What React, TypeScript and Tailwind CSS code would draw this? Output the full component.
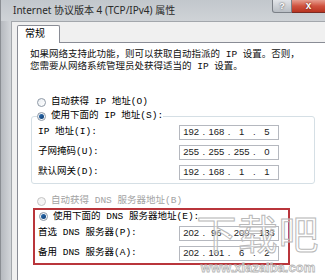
import React from "react";

const cjk = "font-['Liberation_Mono','Noto_Sans_CJK_SC',monospace]";

function Radio({ checked, disabled }: { checked?: boolean; disabled?: boolean }) {
  return (
    <span
      className={`inline-flex items-center justify-center w-[9px] h-[9px] rounded-full border ${
        disabled ? "border-[#c4c4c4] bg-[#f4f4f4]" : "border-[#8e99a6] bg-gradient-to-br from-[#e9edf1] to-[#ffffff]"
      }`}
    >
      {checked && <span className="w-[5px] h-[5px] rounded-full bg-gradient-to-br from-[#2d6fb2] to-[#0e3d73]" />}
    </span>
  );
}

function IpBox({ parts }: { parts: string[] }) {
  return (
    <div className="flex items-center w-[100px] h-[15px] border border-[#b5b8bf] bg-white text-[9.5px] text-[#222] font-['Liberation_Sans',sans-serif] leading-none">
      {parts.map((p, i) => (
        <React.Fragment key={i}>
          <span className="flex-1 text-center">{p}</span>
          {i < parts.length - 1 && <span className="w-[3px] text-center">.</span>}
        </React.Fragment>
      ))}
    </div>
  );
}

function Row({ label, parts }: { label: string; parts: string[] }) {
  return (
    <div className="grid grid-cols-[141px_100px] items-center h-[20px]">
      <span className="text-[9.5px] leading-none">{label}</span>
      <IpBox parts={parts} />
    </div>
  );
}

export default function App() {
  return (
    <div className={`w-[325px] h-[280px] overflow-hidden bg-[#c7cbd0] flex flex-col relative text-black ${cjk}`}>
      {/* Title bar */}
      <div className="h-[21px] flex items-start bg-gradient-to-b from-[#c2c7cc] to-[#cfd3d7] border-l border-[#8a8e93]">
        <span className="pl-[12px] pt-[3px] text-[10px] leading-[14px] text-[#2a2a2a] font-['Noto_Sans','Noto_Sans_CJK_SC',sans-serif]">
          Internet 协议版本 4 (TCP/IPv4) 属性
        </span>
        <div className="ml-auto flex">
          <div className="w-[20px] h-[13px] flex items-center justify-center rounded-bl-[3px] border border-t-0 border-[#7b8087] bg-gradient-to-b from-[#e2e5e9] to-[#b9bec4] text-[9px] leading-none font-bold text-white font-['Liberation_Sans',sans-serif] [text-shadow:0_0_2px_#333]">
            ?
          </div>
          <div className="w-[33px] h-[13px] flex items-center justify-center border-b border-[#7a2a22] bg-gradient-to-b from-[#e59d8f] via-[#d0523f] to-[#b8331f] text-[10px] leading-none font-bold text-white font-['Liberation_Sans',sans-serif] [text-shadow:0_0_2px_#4a0d05]">
            x
          </div>
        </div>
      </div>

      <div className="flex flex-1">
        {/* Left frame */}
        <div className="w-[11px] bg-gradient-to-r from-[#b6babf] to-[#d3d6da] border-l border-[#8a8e93]" />
        {/* Dialog body */}
        <div className="flex-1 flex flex-col bg-[#f0f0f0] border-l border-t border-[#a3a7ac] pl-[5px] pt-[3px]">
          {/* Tab */}
          <div className="flex">
            <div className="relative z-10 -mb-px w-[43px] h-[18px] bg-white border border-b-0 border-[#898c95] rounded-t-[2px] pl-[7px] pt-[3px] text-[10px] leading-[12px]">
              常规
            </div>
          </div>
          {/* Panel */}
          <div className="flex-1 bg-white border border-[#898c95] border-r-0 border-b-0 pl-[12px] pt-[6px]">
            <p className="text-[9.5px] leading-[12px] whitespace-nowrap text-[#111]">
              如果网络支持此功能，则可以获取自动指派的 IP 设置。否则，
              <br />
              您需要从网络系统管理员处获得适当的 IP 设置。
            </p>

            <div className="mt-[22px] ml-[7px] flex items-center gap-[5px] h-[14px] text-[9.5px] leading-none">
              <Radio />
              <span>自动获得 IP 地址(O)</span>
            </div>

            <fieldset className="ml-[1px] w-[284px] border border-[#d5dfe5] rounded-[3px] px-[5px] pb-[1px]">
              <legend className="flex items-center gap-[5px] h-[14px] text-[9.5px] leading-none">
                <Radio checked />
                <span>使用下面的 IP 地址(S):</span>
              </legend>
              <div className="-mt-px pl-[1px]">
                <Row label="IP 地址(I):" parts={["192", "168", "1", "5"]} />
                <Row label="子网掩码(U):" parts={["255", "255", "255", "0"]} />
                <Row label="默认网关(D):" parts={["192", "168", "1", "1"]} />
              </div>
            </fieldset>

            <div className="mt-[10px] ml-[7px] flex items-center gap-[5px] h-[14px] text-[9.5px] leading-none text-[#a3a3a3]">
              <Radio disabled />
              <span>自动获得 DNS 服务器地址(B)</span>
            </div>

            <div className="ml-[3px] w-[257px] border-2 border-[#b9353b] pl-[3px]">
              <div className="flex items-center gap-[5px] h-[13px] pl-[1px] text-[9.5px] leading-none">
                <Radio checked />
                <span>使用下面的 DNS 服务器地址(E):</span>
              </div>
              <Row label="首选 DNS 服务器(P):" parts={["202", "96", "209", "133"]} />
              <Row label="备用 DNS 服务器(A):" parts={["202", "101", "6", "2"]} />
            </div>
          </div>
        </div>
      </div>

      {/* Watermark */}
      <div className="absolute left-[196px] top-[204px] w-[124px] flex flex-col items-center pointer-events-none">
        <span className="text-[40px] leading-[56px] tracking-[1px] text-white/40 [-webkit-text-stroke:1px_#b9b9b9] font-['Noto_Sans_CJK_SC',sans-serif] whitespace-nowrap">
          下载吧
        </span>
        <span className="mt-[1px] text-[13px] leading-[14px] font-bold text-white/40 [-webkit-text-stroke:0.8px_#b5b5b5] font-['Liberation_Sans',sans-serif] whitespace-nowrap">
          www.xiazaiba.com
        </span>
      </div>
    </div>
  );
}
